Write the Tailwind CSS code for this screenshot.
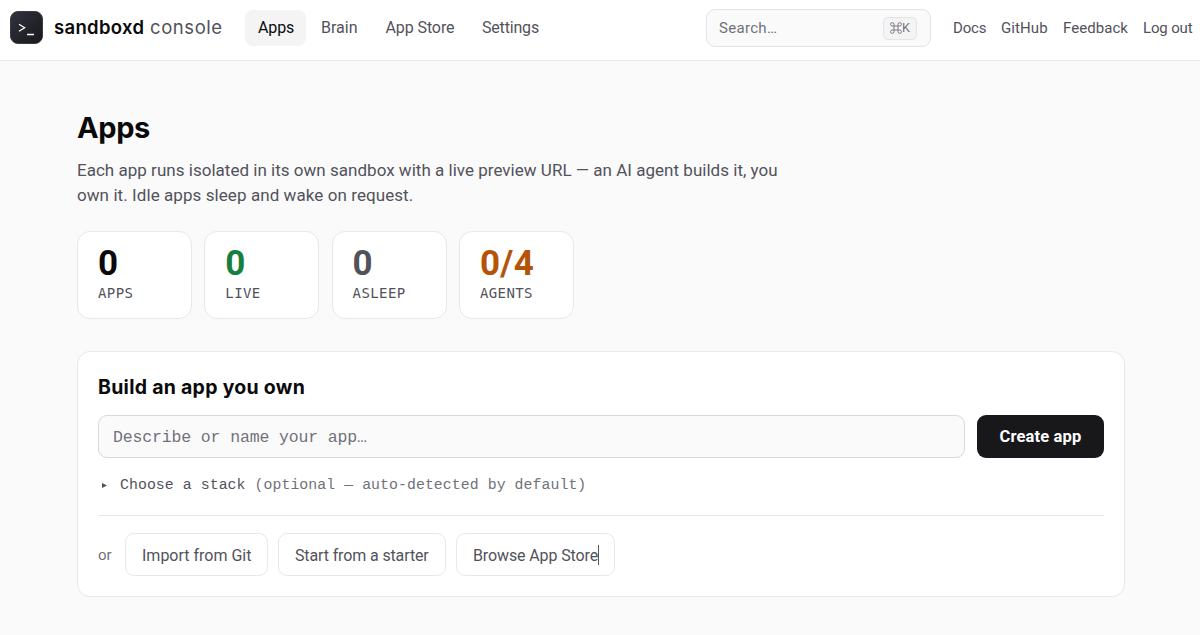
<!DOCTYPE html>
<html lang="en">
<head>
<meta charset="utf-8">
<title>sandboxd console</title>
<script src="https://cdn.jsdelivr.net/npm/@tailwindcss/browser@4"></script>
</head>
<body class="h-[635px] overflow-hidden bg-[#fafafa] font-[Roboto,sans-serif] text-[#52525b]">
<header class="flex h-[61px] items-start border-b border-[#e8e8ea] bg-white pl-[10px]">
  <div class="mt-[11px] flex h-[33px] w-[235px] items-center">
    <svg class="size-[33px]" viewBox="0 0 33 33" fill="none"><defs><linearGradient id="g" x1="0" y1="0" x2="1" y2="1"><stop stop-color="#30323e"/><stop offset="1" stop-color="#18181b"/></linearGradient></defs><rect x=".5" y=".5" width="32" height="32" rx="7.5" fill="url(#g)" stroke="#3b3b42"/><path d="M9 13.200l5.600 3.500-5.600 3.500M17 23.500h7" stroke="#fff" stroke-width="1.300"/></svg>
    <span class="ml-[11px] w-[96px] font-[Inter,sans-serif] text-[18.500px] font-semibold tracking-[0.330px] text-[#0a0a0b]">sandboxd</span><span class="font-[Inter,sans-serif] text-[18.500px] tracking-[0.570px]">console</span>
  </div>
  <nav class="mt-[10px] flex h-[36px] items-center text-[16px]">
    <a class="flex h-[36px] w-[61px] items-center rounded-lg bg-[#f4f4f5] pl-[13px] tracking-[-0.100px] text-[#0a0a0b]">Apps</a>
    <a class="w-[64.500px] pl-[15px]">Brain</a>
    <a class="w-[96.500px] pl-[15px] tracking-[-0.100px]">App Store</a>
    <a class="pl-[15px] tracking-[-0.180px]">Settings</a>
  </nav>
  <div class="mt-[9px] mr-[22px] ml-auto flex h-[38px] w-[225px] items-center rounded-[9px] border border-[#e4e4e7] bg-[#fafafa] pr-[13px] pl-[12px] text-[15px] text-[#71717a]">
    <span class="tracking-[0.300px]">Search…</span>
    <kbd class="ml-auto flex h-[23px] w-[34px] items-center justify-center rounded-[5px] border border-[#e4e4e7] bg-[#f4f4f5] font-[Roboto,sans-serif] text-[12.500px]"><svg class="size-[12px]" viewBox="0 0 12 12" fill="none" stroke="currentColor" stroke-width=".9"><path d="M4 4H2.300A1.700 1.700 0 1 1 4 2.300V9.700A1.700 1.700 0 1 1 2.300 8H9.700A1.700 1.700 0 1 1 8 9.700V2.300A1.700 1.700 0 1 1 9.700 4H4"/></svg><span>K</span></kbd>
  </div>
  <div class="mt-[10px] flex h-[36px] w-[247px] items-center text-[15px]">
    <a class="w-[48px] tracking-[-0.150px]">Docs</a><a class="w-[62px] tracking-[0.100px]">GitHub</a><a class="w-[80px] tracking-[0.050px]">Feedback</a><a class="tracking-[-0.150px]">Log out</a>
  </div>
</header>
<main class="pl-[77px]">
  <h1 class="pt-[49px] font-[Inter,sans-serif] text-[29px] leading-[36px] font-bold tracking-[-0.400px] text-[#0a0a0b]">Apps</h1>
  <p class="mt-[12px] text-[17px] leading-[25px]"><span class="tracking-[0.020px]">Each app runs isolated in its own sandbox with a live preview URL — an AI agent builds it, you</span><br><span class="tracking-[0.075px]">own it. Idle apps sleep and wake on request.</span></p>
  <section class="mt-[23px] flex gap-[12.300px] font-['DejaVu_Sans_Mono',monospace] text-[14px] tracking-[0.400px]">
    <div class="h-[88px] w-[115px] rounded-[13px] border border-[#e8e8ea] bg-white pt-[14px] pl-[20px]"><div class="font-[Roboto,sans-serif] text-[35px] leading-[36px] font-bold tracking-normal text-[#0a0a0b]">0</div><div class="leading-[22px]">APPS</div></div>
    <div class="h-[88px] w-[115px] rounded-[13px] border border-[#e8e8ea] bg-white pt-[14px] pl-[20px]"><div class="font-[Roboto,sans-serif] text-[35px] leading-[36px] font-bold tracking-normal text-[#15803d]">0</div><div class="leading-[22px]">LIVE</div></div>
    <div class="h-[88px] w-[115px] rounded-[13px] border border-[#e8e8ea] bg-white pt-[14px] pl-[20px]"><div class="font-[Roboto,sans-serif] text-[35px] leading-[36px] font-bold tracking-normal">0</div><div class="leading-[22px]">ASLEEP</div></div>
    <div class="h-[88px] w-[115px] rounded-[13px] border border-[#e8e8ea] bg-white pt-[14px] pl-[20px]"><div class="font-[Roboto,sans-serif] text-[35px] leading-[36px] font-bold tracking-[0.400px] text-[#b45309]">0/4</div><div class="leading-[22px]">AGENTS</div></div>
  </section>
  <section class="mt-[32px] h-[246px] w-[1048px] rounded-[13px] border border-[#e8e8ea] bg-white px-[20px] pt-[21px]">
    <h2 class="font-[Inter,sans-serif] text-[19.500px] leading-[28px] font-bold tracking-[0.270px] text-[#0a0a0b]">Build an app you own</h2>
    <div class="mt-[14px] flex gap-[12px]">
      <div class="flex h-[43px] w-[867px] items-center rounded-[9px] border border-[#d9d9dd] bg-[#fafafa] pt-[4px] pl-[14px] font-['Liberation_Mono',monospace] text-[16.500px] tracking-[-0.140px] text-[#71717a]">Describe or name your app…</div>
      <button class="flex h-[43px] w-[127px] items-center justify-center rounded-[9px] bg-[#18181b] pt-[2px] text-[16.500px] font-bold tracking-[0.150px] text-white">Create app</button>
    </div>
    <div class="mt-[15px] flex h-[24px] items-center font-['Liberation_Mono',monospace] text-[14.850px] tracking-[0.060px]">
      <svg class="mr-[13px] ml-[4px] h-[5px] w-[5px]" viewBox="0 0 5 5"><path d="M0 0l5 2.500-5 2.500z" fill="currentColor"/></svg><span>Choose a stack <i class="text-[#71717a] not-italic">(optional — auto-detected by default)</i></span>
    </div>
    <div class="mt-[18px] flex items-center border-t border-[#e8e8ea] pt-[17px] text-[16px]">
      <div class="w-[27px] pt-px text-[15px] text-[#71717a]">or</div>
      <button class="mr-[10px] flex h-[43px] w-[143px] items-center rounded-[9px] border border-[#e8e8ea] pt-[2px] pl-[16px]">Import from Git</button>
      <button class="mr-[10px] flex h-[43px] w-[168px] items-center rounded-[9px] border border-[#e8e8ea] pt-[2px] pl-[16px] tracking-[-0.130px]">Start from a starter</button>
      <button class="flex h-[43px] w-[159px] items-center rounded-[9px] border border-[#e8e8ea] pt-[2px] pl-[16px] tracking-[-0.120px]"><span>Browse App Store</span><i class="mb-[2px] h-[20px] w-px bg-[#52525b]"></i></button>
    </div>
  </section>
</main>
</body>
</html>
